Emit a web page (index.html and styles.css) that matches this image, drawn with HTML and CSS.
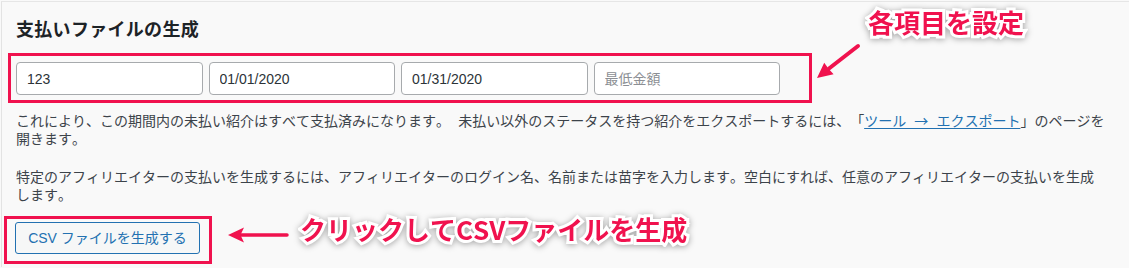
FILE: index.html
```html
<!DOCTYPE html>
<html lang="ja">
<head>
<meta charset="utf-8">
<title>支払いファイルの生成</title>
<link rel="stylesheet" href="styles.css">
</head>
<body>
<div class="page">
  <section class="card">
    <h2 class="title">支払いファイルの生成</h2>
    <div class="fields">
      <input class="field" type="text" value="123">
      <input class="field" type="text" value="01/01/2020">
      <input class="field" type="text" value="01/31/2020">
      <input class="field" type="text" placeholder="最低金額">
    </div>
    <p class="desc desc-first">これにより、この期間内の未払い紹介はすべて支払済みになります。 未払い以外のステータスを持つ紹介をエクスポートするには、「<a class="link" href="#">ツール → エクスポート</a>」のページを<span class="nobr">開きます。</span></p>
    <p class="desc">特定のアフィリエイターの支払いを生成するには、アフィリエイターのログイン名、名前または苗字を入力します。空白にすれば、任意のアフィリエイターの支払いを生成<span class="nobr">します。</span></p>
    <button class="button" type="button">CSV ファイルを生成する</button>
  </section>

  <div class="note-box note-box-fields"></div>
  <div class="note-box note-box-button"></div>
  <span class="note-label note-label-fields">各項目を設定</span>
  <span class="note-label note-label-button">クリックしてCSVファイルを生成</span>
  <svg class="note-arrow note-arrow-fields" viewBox="805 38 60 45" width="60" height="45" aria-hidden="true">
    <line x1="858" y1="45" x2="829" y2="67.5" stroke="#f0124e" stroke-width="4" stroke-linecap="round"/>
    <polygon points="817,77 824.2,61.8 828.4,67.6 833.6,73.2" fill="#f0124e"/>
  </svg>
  <svg class="note-arrow note-arrow-button" viewBox="224 224 68 20" width="68" height="20" aria-hidden="true">
    <line x1="287" y1="234" x2="240" y2="234" stroke="#f0124e" stroke-width="3.5" stroke-linecap="round"/>
    <polygon points="228,234 244,226.5 240.5,234 244,241.5" fill="#f0124e"/>
  </svg>
</div>
</body>
</html>
```

FILE: styles.css
```css
html, body {
  margin: 0;
  padding: 0;
}

body {
  background: #f9f9f9;
  font-family: "Noto Sans CJK JP", "Noto Sans", sans-serif;
  color: #3c434a;
  width: 1129px;
  height: 268px;
  overflow: hidden;
  font-kerning: none;
  font-feature-settings: "palt" 0, "kern" 0;
  text-spacing-trim: space-all;
}

.page {
  position: relative;
  width: 1129px;
  height: 268px;
}

.card {
  margin: 1px 0 0 1px;
  border-top: 1px solid #e6e6e6;
  border-left: 1px solid #e3e3e3;
  background: #f9f9f9;
  padding: 14px 0 0 14px;
  height: 266px;
  box-sizing: border-box;
}

.title {
  margin: 0;
  font-size: 18px;
  line-height: 24px;
  font-weight: 700;
  color: #1d2327;
  letter-spacing: 0.3px;
}

.fields {
  display: flex;
  gap: 6px;
  margin-top: 22px;
}

.field {
  width: 186.5px;
  height: 33px;
  box-sizing: border-box;
  margin: 0;
  padding: 0 10px;
  border: 1px solid #a7aaad;
  border-radius: 4px;
  background: #ffffff;
  font-family: "Liberation Sans", "Noto Sans CJK JP", sans-serif;
  font-size: 14px;
  color: #2c3338;
  outline: none;
}

.field::placeholder {
  color: #8c8f94;
  font-family: "Noto Sans CJK JP", sans-serif;
}

.desc {
  width: 1100px;
  margin: 20px 0 0;
  font-size: 14px;
  line-height: 18px;
  color: #3c434a;
}

.desc-first {
  margin-top: 16px;
  word-spacing: 5px;
}

.nobr {
  white-space: nowrap;
}

.link {
  color: #2271b1;
  text-decoration: underline;
  text-underline-offset: 2px;
}

.button {
  display: block;
  margin: 19px 0 0 -1px;
  width: 185px;
  height: 32px;
  padding: 0 10px;
  border: 1px solid #2271b1;
  border-radius: 3px;
  background: #f6f7f7;
  color: #2271b1;
  font-family: "Liberation Sans", "Noto Sans CJK JP", sans-serif;
  font-size: 14px;
  line-height: 30px;
  text-align: center;
  cursor: pointer;
}

.note-box {
  position: absolute;
  box-sizing: border-box;
  border: 3.5px solid #f0124e;
}

.note-box-fields {
  left: 8px;
  top: 52px;
  width: 804px;
  height: 50px;
}

.note-box-button {
  left: 4px;
  top: 215px;
  width: 208px;
  height: 48px;
}

.note-label {
  position: absolute;
  font-family: "Noto Sans CJK JP", sans-serif;
  font-weight: 700;
  font-size: 26px;
  line-height: 30px;
  color: #f0124e;
  white-space: nowrap;
  -webkit-text-stroke: 6px #ffffff;
  paint-order: stroke fill;
  filter: drop-shadow(0 1px 3px rgba(0, 0, 0, 0.35));
}

.note-label-fields {
  left: 868px;
  top: 6px;
}

.note-label-button {
  left: 300px;
  top: 213px;
}

.note-arrow {
  position: absolute;
  overflow: visible;
}

.note-arrow-fields {
  left: 805px;
  top: 38px;
}

.note-arrow-button {
  left: 224px;
  top: 224px;
}
```
